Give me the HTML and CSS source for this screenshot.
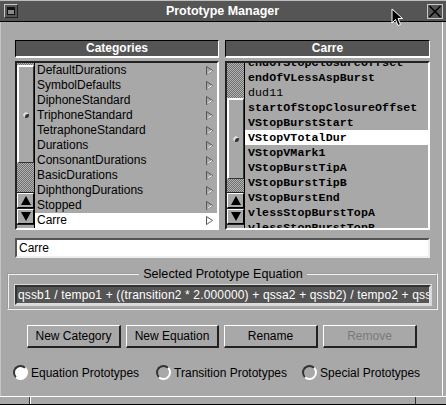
FILE: index.html
```html
<!DOCTYPE html>
<html>
<head>
<meta charset="utf-8">
<title>Prototype Manager</title>
<link rel="stylesheet" href="styles.css">
</head>
<body>
<div class="win">
  <div class="titlebar">
    <div class="menu-btn"><div class="menu-inner"></div></div>
    <div class="title">Prototype Manager</div>
    <div class="close-btn"><svg width="14" height="13" viewBox="0 0 14 13"><path d="M1.5 1 L12.5 12 M12.5 1 L1.5 12" stroke="#000" stroke-width="1.5"/></svg></div>
  </div>
  <div class="main">
    <div class="cols">
      <div class="col">
        <div class="hdr">Categories</div>
        <div class="list">
          <div class="sb">
            <div class="stip stip-top"></div>
            <div class="thumb thumb-left"><span class="grip"></span></div>
            <div class="stip grow"></div>
            <div class="arrows">
              <div class="arrow"><svg width="14" height="13" viewBox="0 0 14 13"><path d="M7 2 L12 11 L2 11 Z" fill="#000"/></svg></div>
              <div class="arrow"><svg width="14" height="13" viewBox="0 0 14 13"><path d="M2 2 L12 2 L7 11 Z" fill="#000"/></svg></div>
            </div>
          </div>
          <div class="items sans">
            <div class="row"><span>DefaultDurations</span><svg class="tri" width="7" height="9" viewBox="0 0 7 9"><path d="M0.5 0.5 L6.5 4.5 L0.5 8.5 Z" fill="none" stroke="#555"/><path d="M1.5 7.5 L6 4.5" stroke="#fff"/></svg></div>
            <div class="row"><span>SymbolDefaults</span><svg class="tri" width="7" height="9" viewBox="0 0 7 9"><path d="M0.5 0.5 L6.5 4.5 L0.5 8.5 Z" fill="none" stroke="#555"/><path d="M1.5 7.5 L6 4.5" stroke="#fff"/></svg></div>
            <div class="row"><span>DiphoneStandard</span><svg class="tri" width="7" height="9" viewBox="0 0 7 9"><path d="M0.5 0.5 L6.5 4.5 L0.5 8.5 Z" fill="none" stroke="#555"/><path d="M1.5 7.5 L6 4.5" stroke="#fff"/></svg></div>
            <div class="row"><span>TriphoneStandard</span><svg class="tri" width="7" height="9" viewBox="0 0 7 9"><path d="M0.5 0.5 L6.5 4.5 L0.5 8.5 Z" fill="none" stroke="#555"/><path d="M1.5 7.5 L6 4.5" stroke="#fff"/></svg></div>
            <div class="row"><span>TetraphoneStandard</span><svg class="tri" width="7" height="9" viewBox="0 0 7 9"><path d="M0.5 0.5 L6.5 4.5 L0.5 8.5 Z" fill="none" stroke="#555"/><path d="M1.5 7.5 L6 4.5" stroke="#fff"/></svg></div>
            <div class="row"><span>Durations</span><svg class="tri" width="7" height="9" viewBox="0 0 7 9"><path d="M0.5 0.5 L6.5 4.5 L0.5 8.5 Z" fill="none" stroke="#555"/><path d="M1.5 7.5 L6 4.5" stroke="#fff"/></svg></div>
            <div class="row"><span>ConsonantDurations</span><svg class="tri" width="7" height="9" viewBox="0 0 7 9"><path d="M0.5 0.5 L6.5 4.5 L0.5 8.5 Z" fill="none" stroke="#555"/><path d="M1.5 7.5 L6 4.5" stroke="#fff"/></svg></div>
            <div class="row"><span>BasicDurations</span><svg class="tri" width="7" height="9" viewBox="0 0 7 9"><path d="M0.5 0.5 L6.5 4.5 L0.5 8.5 Z" fill="none" stroke="#555"/><path d="M1.5 7.5 L6 4.5" stroke="#fff"/></svg></div>
            <div class="row"><span>DiphthongDurations</span><svg class="tri" width="7" height="9" viewBox="0 0 7 9"><path d="M0.5 0.5 L6.5 4.5 L0.5 8.5 Z" fill="none" stroke="#555"/><path d="M1.5 7.5 L6 4.5" stroke="#fff"/></svg></div>
            <div class="row"><span>Stopped</span><svg class="tri" width="7" height="9" viewBox="0 0 7 9"><path d="M0.5 0.5 L6.5 4.5 L0.5 8.5 Z" fill="none" stroke="#555"/><path d="M1.5 7.5 L6 4.5" stroke="#fff"/></svg></div>
            <div class="row sel"><span>Carre</span><svg class="tri" width="7" height="9" viewBox="0 0 7 9"><path d="M0.5 0.5 L6.5 4.5 L0.5 8.5 Z" fill="none" stroke="#555"/><path d="M1.5 7.5 L6 4.5" stroke="#aaa"/></svg></div>
          </div>
        </div>
      </div>
      <div class="col">
        <div class="hdr">Carre</div>
        <div class="list">
          <div class="sb">
            <div class="stip stip-right-top"></div>
            <div class="thumb thumb-right"><span class="grip"></span></div>
            <div class="stip grow"></div>
            <div class="arrows">
              <div class="arrow"><svg width="14" height="13" viewBox="0 0 14 13"><path d="M7 2 L12 11 L2 11 Z" fill="#000"/></svg></div>
              <div class="arrow"><svg width="14" height="13" viewBox="0 0 14 13"><path d="M2 2 L12 2 L7 11 Z" fill="#000"/></svg></div>
            </div>
          </div>
          <div class="items mono">
            <div class="scroller">
              <div class="row b">endOfStopClosureOffset</div>
              <div class="row b">endOfVLessAspBurst</div>
              <div class="row">dud11</div>
              <div class="row b">startOfStopClosureOffset</div>
              <div class="row b">VStopBurstStart</div>
              <div class="row b sel">VStopVTotalDur</div>
              <div class="row b">VStopVMark1</div>
              <div class="row b">VStopBurstTipA</div>
              <div class="row b">VStopBurstTipB</div>
              <div class="row b">VStopBurstEnd</div>
              <div class="row b">vlessStopBurstTopA</div>
              <div class="row b">vlessStopBurstTopB</div>
            </div>
          </div>
        </div>
      </div>
    </div>
    <div class="entry">Carre</div>
    <fieldset class="group">
      <legend>Selected Prototype Equation</legend>
      <div class="eq">qssb1 / tempo1 + ((transition2 * 2.000000) + qssa2 + qssb2) / tempo2 + qssb3</div>
    </fieldset>
    <div class="buttons">
      <div class="btn w94">New Category</div>
      <div class="btn w93">New Equation</div>
      <div class="btn w94">Rename</div>
      <div class="btn w94 disabled">Remove</div>
    </div>
    <div class="radios">
      <div class="radio"><span class="dot on"></span><span>Equation Prototypes</span></div>
      <div class="radio"><span class="dot"></span><span>Transition Prototypes</span></div>
      <div class="radio"><span class="dot"></span><span>Special Prototypes</span></div>
    </div>
  </div>
  <div class="frame-bottom"><span class="seg seg1"></span><span class="seg seg2"></span><span class="seg seg3"></span></div>
  <svg class="cursor" width="13" height="19" viewBox="0 0 13 19"><path d="M1 1 L1 15 L4.5 11.5 L7 17.5 L9.5 16.5 L7 10.5 L11.5 10.5 Z" fill="#000" stroke="#fff" stroke-width="1"/></svg>
</div>
</body>
</html>
```

FILE: styles.css
```css
* { box-sizing: border-box; }
html, body { margin: 0; padding: 0; background: #a8a8a8; }
body { font-family: "Liberation Sans", Arial, sans-serif; font-size: 12px; color: #000; }

.win {
  position: relative;
  width: 446px;
  height: 405px;
  background: #a8a8a8;
  display: flex;
  flex-direction: column;
  overflow: hidden;
}

/* title bar */
.titlebar {
  height: 22px;
  background: #555;
  border-top: 1px solid #bdbdbd;
  border-bottom: 1px solid #000;
  display: grid;
  grid-template-columns: auto 1fr auto;
  align-items: center;
  padding: 0 3px 0 4px;
}
.menu-btn {
  width: 14px;
  height: 14px;
  border: 1px solid #c8c8c8;
  border-right-color: #222;
  border-bottom-color: #222;
  background: #555;
  padding: 2px;
}
.menu-inner {
  width: 100%;
  height: 100%;
  background: #8a8a8a;
  border: 1px solid #111;
  border-top-width: 3px;
}
.title {
  text-align: center;
  color: #fff;
  font-weight: bold;
  font-size: 12.5px;
}
.close-btn {
  width: 16px;
  height: 15px;
  border: 1px solid #c8c8c8;
  background: #555;
  display: flex;
  align-items: center;
  justify-content: center;
}

/* main */
.main {
  flex: 1;
  padding: 18px 16px 0 15px;
  display: flex;
  flex-direction: column;
  box-shadow: inset 1px 0 0 #c4c4c4, inset -3px 0 0 #a8a8a8, inset -4px 0 0 #fff;
}
.cols {
  display: grid;
  grid-template-columns: 204px 205px;
  column-gap: 6px;
}
.col { display: flex; flex-direction: column; }
.hdr {
  height: 18px;
  background: #555;
  color: #fff;
  font-weight: bold;
  font-size: 12px;
  text-align: center;
  line-height: 15px;
  border: 1px solid #000;
  border-right-color: #fff;
  border-bottom: 2px solid #fff;
}
.list {
  margin-top: 3px;
  height: 169px;
  border: 2px solid #222;
  border-right-color: #fff;
  border-bottom-color: #fff;
  display: flex;
  overflow: hidden;
}
.sb {
  width: 18px;
  flex: none;
  display: flex;
  flex-direction: column;
  border-right: 1px solid #000;
  background: #a8a8a8;
  padding-bottom: 3px;
}
.stip {
  background-color: #a8a8a8;
  background-image: repeating-conic-gradient(#6e6e6e 0 25%, #b4b4b4 0 50%);
  background-size: 2px 2px;
}
.stip-top { height: 2px; }
.stip-right-top { height: 35px; }
.grow { flex: 1; }
.thumb {
  border: 2px solid #fff;
  border-right-color: #333;
  border-bottom: 1px solid #333;
  border-right-width: 1px;
  background: #a8a8a8;
  display: flex;
  align-items: center;
  justify-content: center;
}
.thumb-left { height: 98px; }
.thumb-right { height: 81px; }
.grip {
  width: 6px;
  height: 6px;
  border-radius: 50%;
  background: #333;
  box-shadow: inset 2px 2px 0 #ddd;
  margin-left: -1px;
}
.arrows {
  display: flex;
  flex-direction: column;
  gap: 1px;
  background: #222;
  padding: 1px 0;
}
.arrow {
  height: 15px;
  background: #a8a8a8;
  border: 1px solid #fff;
  border-right-color: #000;
  border-bottom-color: #000;
  display: flex;
  align-items: center;
  justify-content: center;
}

.items { flex: 1; overflow: hidden; }
.row {
  height: 15px;
  line-height: 15px;
  white-space: nowrap;
}
.sans .row {
  display: flex;
  justify-content: space-between;
  align-items: center;
  padding: 0 4px 0 2px;
  font-size: 12px;
}
.sel { background: #fff; }
.tri { flex: none; }
.mono { font-family: "Liberation Mono", "Courier New", monospace; font-size: 11.6px; }
.scroller { margin-top: -8px; }
.mono .row { padding-left: 3px; letter-spacing: 0.1px; }
.b { font-weight: bold; }

/* entry */
.entry {
  margin-top: 8px;
  height: 20px;
  background: #fff;
  border: 2px solid #555;
  border-right-color: #eee;
  border-bottom-color: #eee;
  padding-left: 2px;
  line-height: 16px;
  font-size: 12px;
}

/* group */
.group {
  margin: 9px -8px 0 -8px;
  padding: 4px 5px 3px 6px;
  border: 2px groove #f0f0f0;
  min-width: 0;
}
.group legend {
  margin: 0 auto;
  padding: 0 4px;
  line-height: 14px;
  font-size: 12.6px;
}
.eq {
  height: 20px;
  background: #555;
  color: #fff;
  border: 2px solid #333;
  border-right-color: #ddd;
  border-bottom-color: #ddd;
  outline: 1px solid #d8d8d8;
  padding-left: 1px;
  line-height: 16px;
  white-space: nowrap;
  overflow: hidden;
  letter-spacing: 0.15px;
}

/* buttons */
.buttons {
  margin-top: 15px;
  display: flex;
  justify-content: center;
  gap: 5px;
  padding-right: 1px;
}
.btn {
  height: 23px;
  border: 1px solid #fff;
  border-right: 2px solid #222;
  border-bottom: 2px solid #222;
  line-height: 20px;
  text-align: center;
  font-size: 12px;
}
.w94 { width: 94px; }
.w93 { width: 93px; }
.disabled { color: #7a7a7a; }

/* radios */
.radios {
  margin: 17px 0 0 -2px;
  display: flex;
  gap: 17px;
}
.radio {
  display: flex;
  align-items: center;
  gap: 3px;
  height: 15px;
  font-size: 12px;
}
.radio:last-child { margin-left: -2px; }
.dot {
  width: 15px;
  height: 15px;
  border-radius: 50%;
  border: 2px solid #333;
  border-right-color: #fff;
  border-bottom-color: #fff;
  background: #a8a8a8;
}
.dot.on { background: #fff; }

/* bottom frame */
.frame-bottom {
  height: 9px;
  border-top: 1px solid #fff;
  border-bottom: 1px solid #000;
  display: grid;
  grid-template-columns: 29px 1fr 30px;
  flex: none;
}
.seg2 { border-left: 1px solid #333; border-right: 1px solid #333; box-shadow: inset 1px 0 0 #fff; }

/* pointer overlay */
.cursor {
  position: absolute;
  left: 391px;
  top: 8px;
}
```
